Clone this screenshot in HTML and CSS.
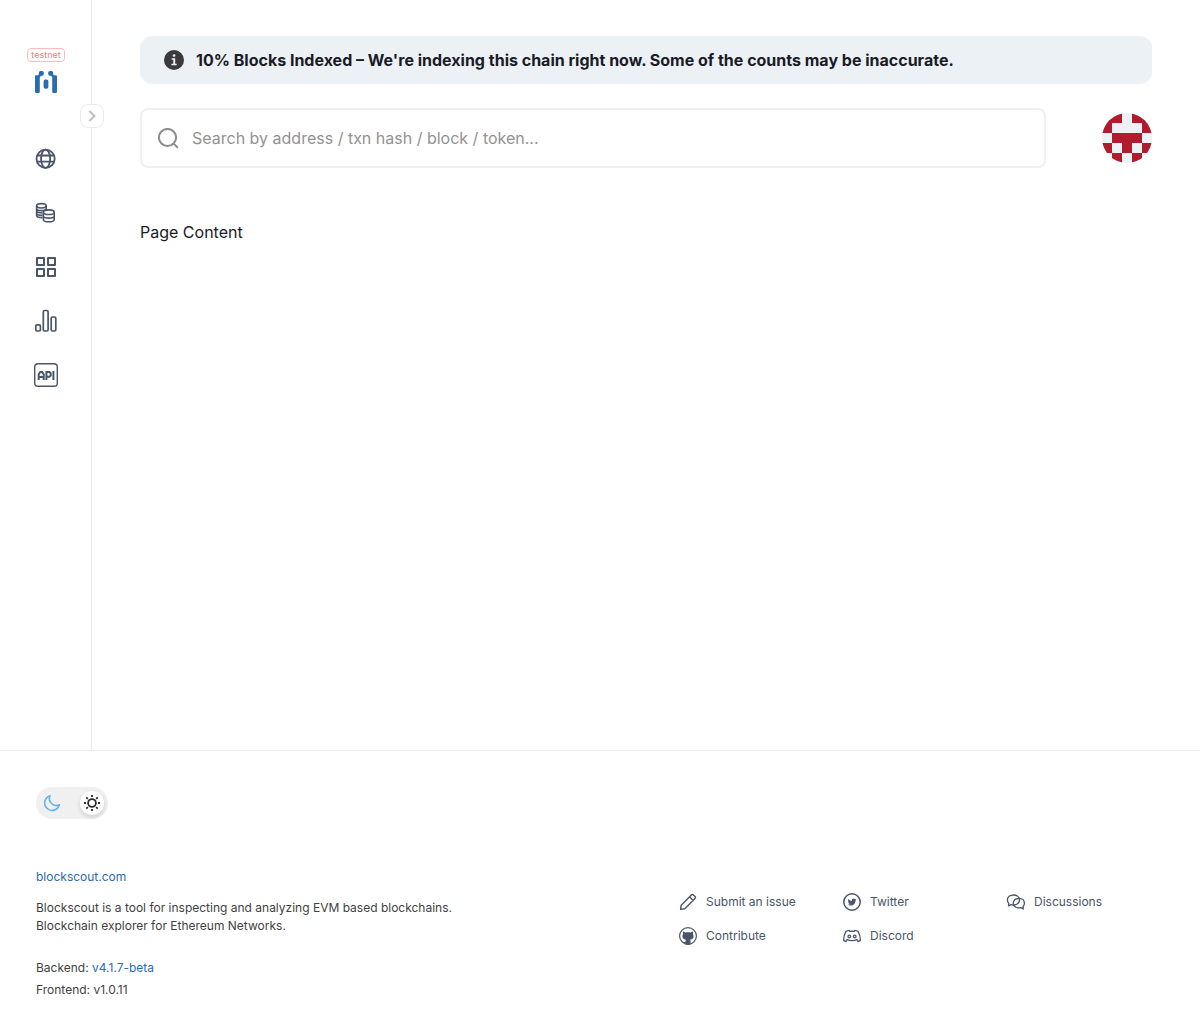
FILE: index.html
```html
<!DOCTYPE html>
<html lang="en">
<head>
<meta charset="utf-8">
<meta name="viewport" content="width=device-width, initial-scale=1">
<title>Blockscout</title>
<link rel="stylesheet" href="styles.css">
</head>
<body>
<div class="layout">
  <aside class="sidebar">
    <span class="badge">testnet</span>
    <a class="logo" href="#" aria-label="Home">
      <svg width="24" height="24" viewBox="0 0 24 24" fill="currentColor"><rect x="1" y="5.3" width="4.8" height="17.7" rx="1.2"/><rect x="4.8" y="1" width="5" height="4.7" rx="1.8"/><path d="M4 5.3L5.2 4l2.4 1-1.8 2.2H4z"/><rect x="9.6" y="9.6" width="4.8" height="9.2" rx="1.8"/><rect x="14.2" y="1" width="5" height="4.7" rx="1.8"/><path d="M20 5.3L18.8 4l-2.4 1 1.8 2.2H20z"/><rect x="18.2" y="5.3" width="4.8" height="17.7" rx="1.2"/></svg>
    </a>
    <button class="expander" type="button" aria-label="Expand menu">
      <svg width="20" height="20" viewBox="0 0 20 20" fill="none" stroke="currentColor" stroke-width="2"><path d="M7.3 5l5.2 5-5.2 5"/></svg>
    </button>
    <nav class="nav" aria-label="Main">
      <a class="nav-link" href="#" aria-label="Blockchain">
        <svg width="30" height="30" viewBox="0 0 30 30" fill="none" stroke="currentColor" stroke-width="1.8"><circle cx="14.6" cy="14.7" r="9.1"/><ellipse cx="14.6" cy="14.7" rx="4.6" ry="9.1"/><path d="M6 11.5h17.2M6 17.7h17.2"/></svg>
      </a>
      <a class="nav-link" href="#" aria-label="Tokens">
        <svg width="30" height="30" viewBox="0 0 30 30" fill="none" stroke="currentColor" stroke-width="1.6"><ellipse cx="10.4" cy="7.8" rx="4.8" ry="2.2"/><path d="M5.6 7.8v9.6c0 1.3 2.2 2.2 6 2.2M5.6 10.4c0 1.3 2.2 2.2 4.8 2.2s4.8-.9 4.8-2.2M5.6 12.8c0 1.3 2.2 2.2 6 2.2M5.6 15.2c0 1.3 2.2 2.2 6 2.2M15.2 7.8v4.4"/><ellipse cx="17.8" cy="14.2" rx="5.4" ry="2.3"/><path d="M12.4 14.2v7.2c0 1.3 2.4 2.3 5.4 2.3s5.4-1 5.4-2.3v-7.2M12.4 17.8c0 1.3 2.4 2.3 5.4 2.3s5.4-1 5.4-2.3"/></svg>
      </a>
      <a class="nav-link" href="#" aria-label="Apps">
        <svg width="30" height="30" viewBox="0 0 30 30" fill="none" stroke="currentColor" stroke-width="2" stroke-linejoin="round"><rect x="6" y="6" width="7" height="7"/><rect x="17" y="6" width="7" height="7"/><rect x="6" y="17" width="7" height="7"/><rect x="17" y="17" width="7" height="7"/></svg>
      </a>
      <a class="nav-link" href="#" aria-label="Charts">
        <svg width="30" height="30" viewBox="0 0 30 30" fill="none" stroke="currentColor" stroke-width="1.7"><rect x="4.8" y="18.8" width="4.6" height="6.2" rx="1.2"/><rect x="12.3" y="4.5" width="4.8" height="20.5" rx="1.2"/><rect x="20.2" y="11" width="4.6" height="14" rx="1.2"/></svg>
      </a>
      <a class="nav-link" href="#" aria-label="API">
        <svg width="30" height="30" viewBox="0 0 30 30" fill="none" stroke="currentColor" stroke-width="1.4"><rect x="3.7" y="3.7" width="22.6" height="22.6" rx="3.4"/><g stroke-width="2"><path d="M7.7 20v-5.8l1.6-2.3h1.8l1.6 2.3V20M7.7 17h5M15.4 20v-8h3l1.3 1.2v2.4l-1.3 1.2h-3M22.4 11v9"/></g></svg>
      </a>
    </nav>
  </aside>

  <main class="main">
    <div class="alert" role="status">
      <svg class="alert-icon" width="20" height="20" viewBox="0 0 20 20"><circle cx="10" cy="10" r="10" fill="#3a3a3c"/><g fill="#ecf1f5"><circle cx="10.1" cy="5.6" r="1.3"/><path d="M7.6 8.3h3.6v5.5h1.5v1.5H7.4v-1.5h1.9V9.8H7.6z"/></g></svg>
      <span>10% Blocks Indexed – We're indexing this chain right now. Some of the counts may be inaccurate.</span>
    </div>
    <div class="topbar">
      <form class="search">
        <label class="search-label" for="search"><svg width="24" height="24" viewBox="0 0 24 24" fill="none" stroke="currentColor" stroke-width="2" role="img" aria-label="Search"><circle cx="11.5" cy="11.5" r="8.6"/><path d="M17.6 17.6l4.2 4.2"/></svg></label>
        <input class="search-input" id="search" type="text" placeholder="Search by address / txn hash / block / token...">
      </form>
      <button class="avatar" type="button" aria-label="Profile">
        <svg width="50" height="50" viewBox="0 0 5 5" fill="#b01c2e" shape-rendering="crispEdges"><path fill="#ecf1f6" d="M0 0h5v5H0z"/><path d="M0 0h2v1H0zM3 0h2v1H3zM0 1h1v1H0zM4 1h1v1H4zM1 2h3v1H1zM0 3h1v1H0zM2 3h1v1H2zM4 3h1v1H4zM1 4h1v1H1zM3 4h1v1H3z"/></svg>
      </button>
    </div>
    <p class="content">Page Content</p>
  </main>
</div>

<footer class="footer">
  <label class="toggle">
    <input class="toggle-input" type="checkbox" role="switch" aria-label="Light theme" checked>
    <svg class="moon" width="20" height="20" viewBox="0 0 20 20" fill="none" stroke="currentColor" stroke-width="1.6" stroke-linejoin="round"><path d="M8 2.7A7.5 7.5 0 1 0 17.4 11.8 7 7 0 0 1 8 2.7z"/></svg>
    <span class="knob"><svg width="20" height="20" viewBox="0 0 20 20" fill="none" stroke="currentColor" stroke-width="1.8"><circle cx="10" cy="10" r="3.9"/><path d="M10 2v2M10 16v2M2 10h2M16 10h2M4.3 4.3l1.5 1.5M14.2 14.2l1.5 1.5M4.3 15.7l1.5-1.5M14.2 5.8l1.5-1.5"/></svg></span>
  </label>
  <div class="footer-columns">
    <div class="about">
      <a class="site" href="#">blockscout.com</a>
      <p class="description">Blockscout is a tool for inspecting and analyzing EVM based blockchains. Blockchain explorer for Ethereum Networks.</p>
      <p class="version">Backend: <a href="#">v4.1.7-beta</a></p>
      <p class="version">Frontend: v1.0.11</p>
    </div>
    <nav class="links" aria-label="Community">
      <a class="link" href="#"><svg width="20" height="20" viewBox="0 0 20 20" fill="none" stroke="currentColor" stroke-width="1.4" stroke-linejoin="round"><path d="M2.6 17.4l.6-4.2L13.4 3c.7-.7 1.3-.7 2 0l1.6 1.6c.7.7.7 1.3 0 2L6.8 16.8zM11.6 4.8l3.6 3.6"/></svg>Submit an issue</a>
      <a class="link" href="#"><svg width="20" height="20" viewBox="0 0 20 20" fill="none" stroke="currentColor" stroke-width="1.5"><circle cx="10" cy="10" r="8.2"/><path fill="currentColor" stroke="none" d="M14.5 7.5l-1 1c0 2.9-2.1 5.1-4.8 5.1-1.2 0-2.2-.3-3-.8.9.1 1.8-.2 2.4-.7-.8-.1-1.3-.5-1.6-1.2h.7c-.8-.3-1.3-.9-1.3-1.7l.7.2c-.7-.5-.9-1.5-.4-2.3.9 1.1 2.1 1.7 3.6 1.8-.3-1.3.6-2.3 1.8-2.3.5 0 .9.2 1.3.6l1.1-.5-.6.9z"/></svg>Twitter</a>
      <a class="link" href="#"><svg width="20" height="20" viewBox="0 0 20 20" fill="none" stroke="currentColor" stroke-width="1.3" stroke-linejoin="round"><path d="M7.6 3C4 3 1.4 5 1.4 8c0 1.4.5 2.5 1.4 3.4l-.3 2.4 2.6-1.2c3.8 1.3 8.4-.8 8.4-4.6 0-3-2.5-5-5.9-5z"/><path d="M13 6.4c3.1.1 5.4 2 5.4 4.8 0 1.3-.5 2.3-1.3 3.1l.2 2.6-2.5-1.3c-3.9.9-7.6-1-7.6-4.3 0-2.8 2.4-4.9 5.8-4.9"/></svg>Discussions</a>
      <a class="link" href="#"><svg width="20" height="20" viewBox="0 0 20 20" fill="none" stroke="currentColor" stroke-width="1.2"><circle cx="10" cy="10" r="8.4"/><path fill="currentColor" stroke="none" d="M5.2 5.4l2.4 1.1c1.6-.4 3.2-.4 4.8 0l2.4-1.1c.4 1 .4 1.8.1 2.5 1.5 2.6.5 5.4-2.9 5.8.4.5.6 1.1.6 1.8v3H7.4v-1.6c-1.7.3-2.4-.5-3-1.6.9 0 1.2 1 3 .7 0-.9.2-1.7.6-2.3-3.4-.4-4.4-3.2-2.9-5.8-.3-.7-.3-1.5.1-2.5z"/></svg>Contribute</a>
      <a class="link" href="#"><svg width="20" height="20" viewBox="0 0 20 20" fill="none" stroke="currentColor" stroke-width="1.3" stroke-linejoin="round"><path d="M5 13.8l-1 1.8c-1-.2-1.7-.6-2.4-1.3.1-3.5.8-6.4 2.3-8.9 1-.6 2.1-1 3.3-1.1l.6 1.1c1.5-.2 2.9-.2 4.4 0l.6-1.1c1.2.1 2.3.5 3.3 1.1 1.5 2.5 2.2 5.4 2.3 8.9-.7.7-1.4 1.1-2.4 1.3l-1-1.8M4.4 13.3c3.4 1.5 7.8 1.5 11.2 0"/><circle cx="7.3" cy="10.5" r="1.3"/><circle cx="12.7" cy="10.5" r="1.3"/></svg>Discord</a>
    </nav>
  </div>
</footer>
</body>
</html>
```
FILE: styles.css
```css
* { box-sizing: border-box; }

body {
  margin: 0;
  min-height: 100vh;
  display: flex;
  flex-direction: column;
  font-family: Inter, "Liberation Sans", sans-serif;
  font-size: 16px;
  line-height: 24px;
  color: #1a1b27;
  background: #fff;
}

svg { display: block; flex: none; }
p { margin: 0; }
a { color: #2b6cb0; text-decoration: none; }
button { padding: 0; font: inherit; cursor: pointer; }

.layout { flex: 1; display: flex; }

.sidebar {
  position: relative;
  width: 92px;
  flex: none;
  display: flex;
  flex-direction: column;
  align-items: center;
  padding: 48px 0 0 1px;
  border-right: 1px solid #ebebec;
}

.badge {
  height: 14px;
  padding: 0 3px;
  border: 1px solid #fcbcbc;
  border-radius: 4px;
  font-size: 9px;
  line-height: 12px;
  color: #f08080;
}

.logo { margin-top: 8px; }

.expander {
  position: absolute;
  top: 104px;
  right: -13px;
  width: 24px;
  height: 24px;
  display: flex;
  align-items: center;
  justify-content: center;
  border: 1px solid #ebebec;
  border-radius: 8px;
  background: #fff;
  color: #bfbfbf;
}

.nav {
  display: flex;
  flex-direction: column;
  gap: 24px;
  margin-top: 50px;
}

.nav-link { color: #4a5568; }

.main {
  flex: 1;
  min-width: 0;
  padding: 36px 48px;
}

.alert {
  display: flex;
  align-items: center;
  gap: 12px;
  padding: 12px 24px;
  border-radius: 12px;
  background: #ecf1f5;
  font-weight: 700;
}

.topbar {
  display: flex;
  align-items: center;
  gap: 56px;
  margin-top: 24px;
}

.search {
  flex: 1;
  display: flex;
  align-items: center;
  gap: 12px;
  height: 60px;
  padding: 0 14px;
  border: 2px solid #f0f0f0;
  border-radius: 8px;
}

.search-label { color: #8c8c8c; }

.search-input {
  flex: 1;
  min-width: 0;
  padding: 0;
  border: 0;
  outline: 0;
  background: transparent;
  font: inherit;
  color: inherit;
}

.search-input::placeholder { color: #929292; opacity: 1; }

.avatar {
  width: 50px;
  height: 50px;
  overflow: hidden;
  border: 0;
  border-radius: 50%;
  background: none;
}

.content { margin-top: 52px; }

.footer {
  padding: 36px;
  border-top: 1px solid #ebebec;
  font-size: 12px;
  line-height: 18px;
  color: #3f3f41;
}

.toggle {
  display: flex;
  align-items: center;
  justify-content: space-between;
  width: 72px;
  height: 32px;
  padding: 4px 4px 4px 6px;
  border-radius: 16px;
  background: #f0f0f0;
  cursor: pointer;
}

.toggle-input {
  position: absolute;
  width: 1px;
  height: 1px;
  margin: 0;
  opacity: 0;
}

.moon { color: #63b3ed; }

.knob {
  display: flex;
  align-items: center;
  justify-content: center;
  width: 24px;
  height: 24px;
  border-radius: 50%;
  background: #fff;
  box-shadow: 0 2px 4px rgba(0, 0, 0, 0.15);
  color: #2b2b2d;
}

.footer-columns {
  display: flex;
  justify-content: space-between;
  gap: 48px;
  margin-top: 48px;
}

.about { max-width: 470px; }

.site {
  display: block;
  line-height: 20px;
}

.description { margin: 12px 0 24px; }
.version + .version { margin-top: 4px; }

.links {
  display: grid;
  grid-template-columns: repeat(3, 158px);
  align-content: start;
  gap: 12px 6px;
  margin-top: 24px;
}

.link {
  display: flex;
  align-items: center;
  gap: 8px;
  height: 22px;
  color: #4a5568;
}
```
